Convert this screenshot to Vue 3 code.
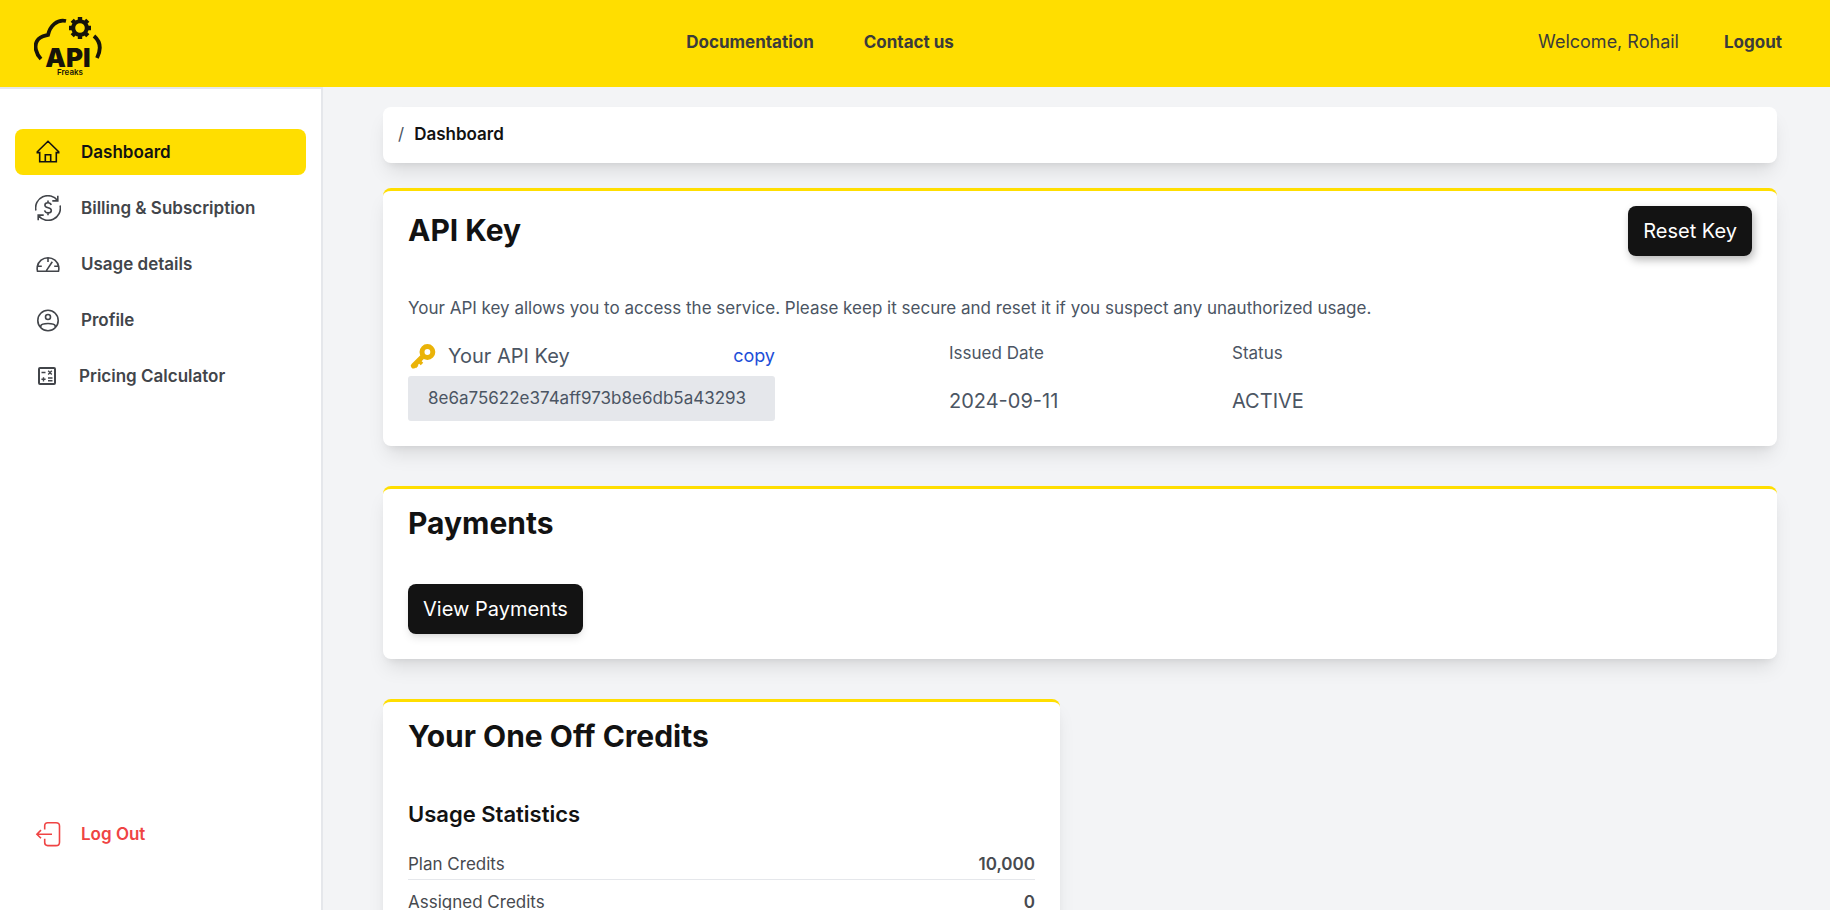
<script setup>
const credits = [
  { label: 'Plan Credits', value: '10,000' },
  { label: 'Assigned Credits', value: '0' },
]
const apiKey = '8e6a75622e374aff973b8e6db5a43293'
</script>

<template>
  <div class="page">
    <header class="topbar">
      <a class="logo" href="#" aria-label="API Freaks">
        <svg width="68" height="62" viewBox="0 0 68 62" fill="none">
          <path d="M7 44C2 39 0 31 3 26C6 21 10 21 14 20C16 11 23 4 32 6" stroke="#16140a" stroke-width="3.8" />
          <path d="M60 21C67 27 67 35 63 43" stroke="#16140a" stroke-width="3.8" />
          <circle cx="46" cy="13" r="6.8" stroke="#16140a" stroke-width="4" />
          <path d="M46 2v4M46 20v4M35 13h4M53 13h4M38.2 5.2l3 3M50.8 17.8l3 3M38.2 20.8l3-3M50.8 8.2l3-3" stroke="#16140a" stroke-width="4.4" />
          <text x="34" y="52" text-anchor="middle" class="logo-api">API</text>
          <text x="36" y="60" text-anchor="middle" class="logo-sub">Freaks</text>
        </svg>
      </a>
      <nav class="topnav">
        <a href="#">Documentation</a>
        <a href="#">Contact us</a>
      </nav>
      <div class="account">
        <span class="welcome">Welcome, Rohail</span>
        <a href="#">Logout</a>
      </div>
    </header>

    <div class="body">
      <aside class="sidebar">
        <nav class="menu">
          <a href="#" class="item active">
            <svg class="icon" viewBox="0 0 26 26">
              <path d="M2.3 13.6V12.8L13 2.3L23.7 12.8V13.6H21.3V22.8H4.7V13.6ZM10.3 22.8V15.8H15.7V22.8" />
            </svg>
            <span>Dashboard</span>
          </a>
          <a href="#" class="item">
            <svg class="icon" viewBox="0 0 26 26">
              <path d="M.9 15.5A12.2 12.2 0 0 1 22.6 5.6M22.8 .8V5.9H17.3M25.1 10.5A12.2 12.2 0 0 1 3.4 20.4M3.2 25.2V20.1H8.7" />
              <path d="M16.2 9.9C15.7 8.3 14.5 7.8 13 7.8C11.2 7.8 9.9 8.7 9.9 10.2C9.9 13.8 16.3 11.8 16.3 15.4C16.3 17 14.9 17.9 13.1 17.9C11.3 17.9 10 17.2 9.6 15.4M13 5.6V7.8M13 17.9V20.2" />
            </svg>
            <span>Billing &amp; Subscription</span>
          </a>
          <a href="#" class="item">
            <svg class="icon" viewBox="0 0 26 26">
              <path d="M2.5 20.2C2 18.5 2 17.2 2.3 15.5A10.9 10.9 0 0 1 23.7 15.5C24 17.2 24 18.5 23.5 20.2ZM13 6.7V11M3 15.3H6.8M19.2 15.3H23M11.4 19.6L17.3 10.8" />
            </svg>
            <span>Usage details</span>
          </a>
          <a href="#" class="item">
            <svg class="icon" viewBox="0 0 26 26">
              <circle cx="13" cy="13.5" r="10.2" />
              <circle cx="13" cy="10" r="2.5" />
              <path d="M5.8 20.5V18.8C6.8 15.8 19.2 15.8 20.2 18.8V20.5" />
            </svg>
            <span>Profile</span>
          </a>
          <a href="#" class="item tight">
            <svg class="icon" viewBox="0 0 26 26">
              <rect x="5" y="5" width="16" height="16" rx="1" stroke-width="2" />
              <path d="M7.5 9.5H11.5M14.2 7.8L17.8 11.4M17.8 7.8L14.2 11.4M9.5 14.2V18.4M7.4 16.3H11.6M14 15H18.5M14 17.7H18.5" stroke-width="1.4" />
            </svg>
            <span>Pricing Calculator</span>
          </a>
        </nav>
        <a href="#" class="item logout">
          <svg class="icon" viewBox="0 0 26 26">
            <path d="M9.7 8.5V4.8C9.7 2.8 10.7 1.8 12.7 1.8H21C23.5 1.8 24.5 2.8 24.5 5V21.2C24.5 23.6 23.5 24.6 21 24.6H12.7C10.7 24.6 9.7 23.6 9.7 21.6V17.8M17 13.2H1.9M6 9.1L1.9 13.2L6 17.3" />
          </svg>
          <span>Log Out</span>
        </a>
      </aside>

      <main class="content">
        <nav class="crumbs" aria-label="Breadcrumb">
          <span>/</span>
          <a href="#">Dashboard</a>
        </nav>

        <section class="card">
          <div class="card-head">
            <h2>API Key</h2>
            <button type="button" class="btn raised">Reset Key</button>
          </div>
          <p>Your API key allows you to access the service. Please keep it secure and reset it if you suspect any unauthorized usage.</p>
          <div class="facts">
            <div class="key">
              <div class="key-head">
                <svg width="30" height="30" viewBox="0 0 30 30" fill="none" stroke="#eab308">
                  <circle cx="19.4" cy="11" r="5.4" stroke-width="5" />
                  <path d="M13.7 16.5L5.4 24.8" stroke-width="5.2" stroke-linecap="round" />
                  <path d="M10.6 19.8L14 23M7 24L9.2 26" stroke-width="3.6" />
                </svg>
                <span class="label">Your API Key</span>
                <button type="button" class="copy">copy</button>
              </div>
              <div class="key-box">{{ apiKey }}</div>
            </div>
            <div>
              <div>Issued Date</div>
              <div class="value">2024-09-11</div>
            </div>
            <div>
              <div>Status</div>
              <div class="value">ACTIVE</div>
            </div>
          </div>
        </section>

        <section class="card">
          <h2>Payments</h2>
          <div class="actions">
            <button type="button" class="btn">View Payments</button>
          </div>
        </section>

        <div class="columns">
          <section class="card">
            <h2>Your One Off Credits</h2>
            <h3>Usage Statistics</h3>
            <dl>
              <div v-for="row in credits" :key="row.label" class="row">
                <dt>{{ row.label }}</dt>
                <dd>{{ row.value }}</dd>
              </div>
            </dl>
          </section>
        </div>
      </main>
    </div>
  </div>
</template>

<style>
body {
  margin: 0;
}
</style>

<style scoped>
.page {
  display: flex;
  flex-direction: column;
  height: 100vh;
  overflow: hidden;
  background: #f3f4f6;
  color: #4b5563;
  font-family: Inter, "Liberation Sans", sans-serif;
  font-size: 17px;
  line-height: 26px;
}
.page * {
  box-sizing: border-box;
}
a {
  color: inherit;
  text-decoration: none;
}
h2,
h3,
p,
dl,
dd {
  margin: 0;
}
button {
  font: inherit;
  border: 0;
  cursor: pointer;
}
.topbar {
  flex: none;
  display: flex;
  align-items: center;
  justify-content: space-between;
  height: 87px;
  padding: 0 48px 4px 34px;
  background: #ffde00;
  color: #3b3b3b;
}
.logo {
  display: flex;
  padding-top: 8px;
}
.logo-api {
  font-family: Inter, sans-serif;
  font-size: 26px;
  font-weight: 900;
  fill: #16140a;
}
.logo-sub {
  font-family: Inter, sans-serif;
  font-size: 8px;
  font-weight: 600;
  fill: #16140a;
}
.topnav {
  display: flex;
  gap: 50px;
  font-weight: 700;
}
.account {
  display: flex;
  gap: 45px;
}
.account a {
  font-weight: 700;
}
.welcome {
  font-size: 18px;
}
.body {
  flex: 1;
  display: flex;
  min-height: 0;
}
.sidebar {
  flex: none;
  display: flex;
  flex-direction: column;
  justify-content: space-between;
  width: 323px;
  padding: 40px 15px 53px;
  border-top: 2px solid #e5e7eb;
  border-right: 2px solid #e5e7eb;
  background: #fff;
}
.menu {
  display: flex;
  flex-direction: column;
  gap: 10px;
}
.item {
  display: flex;
  align-items: center;
  gap: 20px;
  height: 46px;
  padding: 0 20px;
  border-radius: 8px;
  color: #42454a;
  font-weight: 600;
}
.active {
  background: #ffde00;
  color: #121212;
}
.tight {
  gap: 19px;
  padding-left: 19px;
}
.logout {
  color: #ef4444;
}
.icon {
  flex: none;
  width: 26px;
  height: 26px;
  fill: none;
  stroke: currentColor;
  stroke-width: 1.6;
}
.content {
  flex: 1;
  min-width: 0;
  padding: 20px 53px 0 60px;
}
.crumbs {
  display: flex;
  gap: 10px;
  height: 56px;
  margin-bottom: 25px;
  padding: 14px 15px;
  border-radius: 8px;
  background: #fff;
  box-shadow: 0 12px 19px -4px rgba(0, 0, 0, 0.1), 0 5px 8px -5px rgba(0, 0, 0, 0.1);
}
.crumbs a {
  color: #121212;
  font-weight: 600;
}
.card {
  margin-bottom: 40px;
  padding: 15px 25px 25px;
  border-top: 3px solid #ffde00;
  border-radius: 8px;
  background: #fff;
  box-shadow: 0 12px 19px -4px rgba(0, 0, 0, 0.1), 0 5px 8px -5px rgba(0, 0, 0, 0.1);
}
.card-head {
  display: flex;
  align-items: center;
  justify-content: space-between;
  margin-bottom: 39px;
}
h2 {
  padding-bottom: 2px;
  color: #121212;
  font-size: 30px;
  line-height: 38px;
  font-weight: 700;
}
h3 {
  margin: 42px 0 22px;
  color: #121212;
  font-size: 22px;
  line-height: 30px;
  font-weight: 600;
}
.btn {
  height: 50px;
  padding: 0 15px;
  border-radius: 8px;
  background: #131313;
  color: #fff;
  font-size: 20px;
  box-shadow: 0 5px 8px -1px rgba(0, 0, 0, 0.1), 0 3px 5px -3px rgba(0, 0, 0, 0.1);
}
.raised {
  box-shadow: 2px 4px 8px rgba(0, 0, 0, 0.28);
}
.actions {
  display: flex;
  margin-top: 40px;
}
.facts {
  display: grid;
  grid-template-columns: 541fr 283fr 520fr;
  margin-top: 19px;
}
.key {
  justify-self: start;
  min-width: 367px;
}
.key-head {
  display: flex;
  align-items: center;
  height: 36px;
  padding-bottom: 4px;
}
.label {
  margin-left: 10px;
  font-size: 20px;
}
.copy {
  margin-left: auto;
  padding: 0;
  background: none;
  color: #1d4ed8;
  font-size: 18px;
}
.key-box {
  height: 45px;
  padding: 9px 20px;
  border-radius: 3px;
  background: #e5e7eb;
}
.value {
  margin-top: 22px;
  font-size: 20px;
}
.columns {
  display: grid;
  grid-template-columns: 1fr 1fr;
  gap: 40px;
}
.row {
  display: flex;
  justify-content: space-between;
  margin-bottom: 9px;
  padding-bottom: 2px;
  border-bottom: 1px solid #e5e7eb;
  color: #474a4f;
}
dd {
  font-weight: 600;
}
</style>
